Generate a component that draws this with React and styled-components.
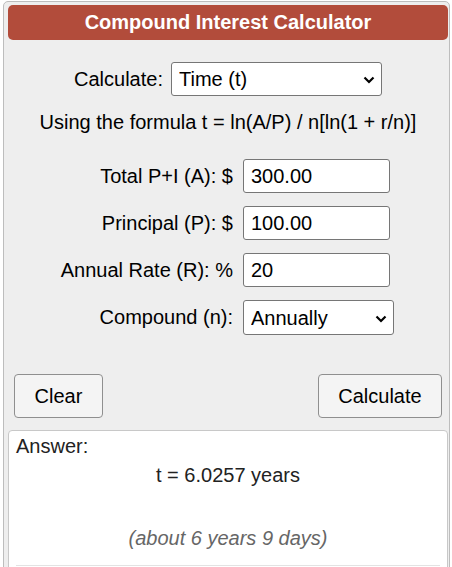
import React from 'react';
import styled, { createGlobalStyle } from 'styled-components';

const GlobalStyle = createGlobalStyle`
  body {
    margin: 0;
    background: #fff;
    font-family: "Liberation Sans", Arial, sans-serif;
    color: #000;
  }
`;

const Panel = styled.div`
  box-sizing: border-box;
  width: 447px;
  height: 580px;
  margin: 1px 0 0 3px;
  padding: 3px 1px 0 4px;
  border: 1px solid #bdbdbd;
  border-radius: 5px;
  background: #eeeeee;
`;

const Header = styled.h1`
  margin: 0;
  height: 35px;
  display: flex;
  align-items: center;
  justify-content: center;
  background: #b24c3b;
  color: #fff;
  border-radius: 5px;
  font-size: 20px;
  font-weight: bold;
`;

const CalcRow = styled.div`
  display: flex;
  justify-content: center;
  align-items: center;
  gap: 8px;
  margin-top: 22px;
  font-size: 20px;
`;

const Formula = styled.div`
  text-align: center;
  font-size: 20px;
  margin-top: 15px;
`;

const Fields = styled.div`
  display: grid;
  grid-template-columns: 225px auto;
  column-gap: 10px;
  row-gap: 13px;
  align-items: center;
  margin-top: 25px;
  font-size: 20px;
`;

const Label = styled.label`
  text-align: right;
`;

const Input = styled.input`
  box-sizing: border-box;
  width: 147px;
  height: 34px;
  padding: 0 7px;
  border: 1px solid #767676;
  border-radius: 3px;
  background: #fff;
  font: 20px "Liberation Sans", Arial, sans-serif;
  color: #000;
`;

const SelectWrap = styled.div`
  position: relative;
  width: ${(p) => p.$w}px;
  height: ${(p) => p.$h}px;
`;

const Select = styled.select`
  box-sizing: border-box;
  width: 100%;
  height: 100%;
  appearance: none;
  padding: 0 7px;
  border: 1px solid #767676;
  border-radius: 3px;
  background: #fff;
  font: 20px "Liberation Sans", Arial, sans-serif;
  color: #000;
`;

const Chevron = styled.svg`
  position: absolute;
  right: 7px;
  top: 50%;
  margin-top: -3px;
  pointer-events: none;
`;

const Buttons = styled.div`
  display: flex;
  justify-content: space-between;
  margin: 39px 6px 0 6px;
`;

const Button = styled.button`
  box-sizing: border-box;
  width: ${(p) => p.$w}px;
  height: 44px;
  border: 1px solid #8f8f8f;
  border-radius: 4px;
  background: #f4f4f4;
  font: 20px "Liberation Sans", Arial, sans-serif;
  color: #000;
`;

const Answer = styled.div`
  box-sizing: border-box;
  margin-top: 12px;
  height: 160px;
  padding: 4px 7px 0 7px;
  background: #fff;
  border: 1px solid #c8c8c8;
  border-radius: 4px;
  font-size: 20px;
  color: #222;
`;

const Result = styled.div`
  text-align: center;
  margin-top: 6px;
`;

const Approx = styled.div`
  text-align: center;
  font-style: italic;
  color: #666;
  margin-top: 40px;
`;

const Rule = styled.hr`
  margin: 15px 0 0 0;
  border: 0;
  border-top: 1px solid #e3e3e3;
`;

const Dropdown = ({ w, h, value, options }) => (
  <SelectWrap $w={w} $h={h}>
    <Select defaultValue={value}>
      {options.map((o) => (
        <option key={o}>{o}</option>
      ))}
    </Select>
    <Chevron width="12" height="8" viewBox="0 0 12 8">
      <path d="M1.5 1.5 L6 6 L10.5 1.5" fill="none" stroke="#000" strokeWidth="2.2" />
    </Chevron>
  </SelectWrap>
);

export default function App() {
  return (
    <>
      <GlobalStyle />
      <Panel>
        <Header>Compound Interest Calculator</Header>
        <CalcRow>
          <span>Calculate:</span>
          <Dropdown w={211} h={34} value="Time (t)" options={['Total P+I (A)', 'Principal (P)', 'Rate (R)', 'Time (t)']} />
        </CalcRow>
        <Formula>Using the formula t = ln(A/P) / n[ln(1 + r/n)]</Formula>
        <Fields>
          <Label>Total P+I (A): $</Label>
          <Input defaultValue="300.00" />
          <Label>Principal (P): $</Label>
          <Input defaultValue="100.00" />
          <Label>Annual Rate (R): %</Label>
          <Input defaultValue="20" />
          <Label>Compound (n):</Label>
          <Dropdown w={151} h={35} value="Annually" options={['Annually', 'Semiannually', 'Quarterly', 'Monthly', 'Daily']} />
        </Fields>
        <Buttons>
          <Button $w={89}>Clear</Button>
          <Button $w={124}>Calculate</Button>
        </Buttons>
        <Answer>
          Answer:
          <Result>t = 6.0257 years</Result>
          <Approx>(about 6 years 9 days)</Approx>
          <Rule />
        </Answer>
      </Panel>
    </>
  );
}
